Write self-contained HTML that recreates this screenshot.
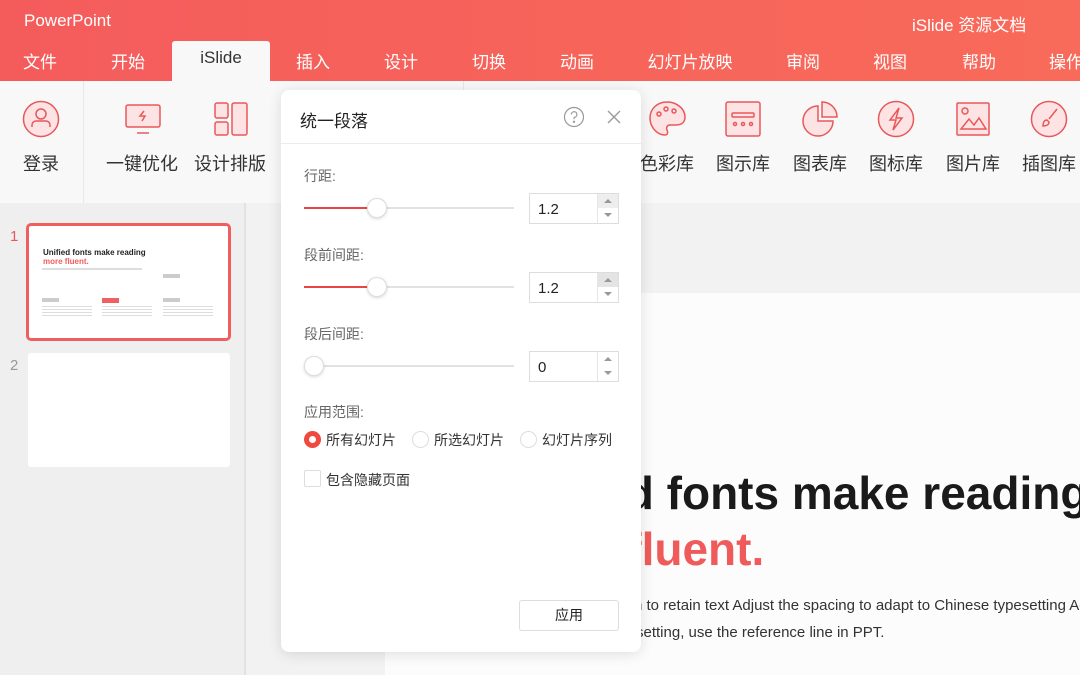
<!DOCTYPE html>
<html><head><meta charset="utf-8"><style>
*{margin:0;padding:0;box-sizing:border-box}
body{width:1080px;height:675px;overflow:hidden;position:relative;background:#f2f2f2;font-family:"Liberation Sans","Noto Sans CJK SC",sans-serif;color:#333}
.a{position:absolute}
.top{left:0;top:0;width:1080px;height:81px;background:linear-gradient(90deg,#f45c5c,#f7655a 60%,#f86a5a)}
.tab{position:absolute;top:48px;font-size:17px;color:#fff;transform:translateX(-50%);white-space:nowrap}
.rib{left:0;top:81px;width:1080px;height:122px;background:#f8f8f8}
.lbl{position:absolute;top:150px;font-size:18px;color:#333;transform:translateX(-50%);white-space:nowrap}
.ic{position:absolute;top:100px}
.dlg{left:281px;top:90px;width:360px;height:562px;background:#fff;border-radius:8px;box-shadow:0 2px 14px rgba(0,0,0,.12)}
.fl{position:absolute;left:23px;font-size:14px;color:#666}
.track{position:absolute;left:23px;width:210px;height:2px;background:#e2e2e2}
.fill{position:absolute;left:0;top:0;height:2px;background:#e84545}
.thumb{position:absolute;width:20px;height:20px;border-radius:50%;background:#fff;border:1px solid #ddd;box-shadow:0 1px 3px rgba(0,0,0,.15);top:-9px}
.inp{position:absolute;left:248px;width:90px;height:31px;border:1px solid #ddd;font-size:15px;color:#222;padding:7px 0 0 8px}
.sp{position:absolute;right:0;top:0;width:21px;height:29px;border-left:1px solid #e6e6e6}
.sp i{display:block;height:14px;position:relative}
.up:after{content:"";position:absolute;left:6px;top:5px;border:4px solid transparent;border-bottom:4px solid #999;border-top:0}
.dn:after{content:"";position:absolute;left:6px;top:5px;border:4px solid transparent;border-top:4px solid #999;border-bottom:0}
.rad{position:absolute;top:341px;width:17px;height:17px;border-radius:50%;border:1px solid #ddd}
.rt{position:absolute;top:340px;font-size:14px;color:#333}
</style></head><body>
<div class="a top"></div>
<div class="a" style="left:24px;top:11px;color:#fff;font-size:17px">PowerPoint</div>
<div class="a" style="left:912px;top:11px;color:#fff;font-size:17px">iSlide 资源文档</div>
<div class="a" style="left:172px;top:41px;width:98px;height:41px;background:#f8f8f8;border-radius:3px 3px 0 0"></div>
<div class="tab" style="left:40px">文件</div><div class="tab" style="left:128px">开始</div>
<div class="tab" style="left:221px;color:#333">iSlide</div>
<div class="tab" style="left:313px">插入</div><div class="tab" style="left:401px">设计</div><div class="tab" style="left:489px">切换</div>
<div class="tab" style="left:577px">动画</div><div class="tab" style="left:690px">幻灯片放映</div><div class="tab" style="left:803px">审阅</div>
<div class="tab" style="left:890px">视图</div><div class="tab" style="left:979px">帮助</div><div class="tab" style="left:1066px">操作</div>
<div class="a rib"></div>
<div class="a" style="left:83px;top:81px;width:1px;height:122px;background:#e8e8e8"></div>
<div class="a" style="left:463px;top:81px;width:1px;height:122px;background:#e8e8e8"></div>
<svg class="ic" style="left:22px" width="38" height="38" viewBox="0 0 38 38" fill="#fde3e3" stroke="#e8585a" stroke-width="1.5"><circle cx="19" cy="19" r="17.5"/><circle cx="19" cy="14" r="5" fill="none"/><path d="M10 27v-2a4 4 0 0 1 4-4h10a4 4 0 0 1 4 4v2" fill="none"/></svg>
<svg class="ic" style="left:124px" width="38" height="38" viewBox="0 0 38 38" stroke="#e8585a" stroke-width="1.5"><rect x="2" y="5" width="34" height="22" rx="2" fill="#fde3e3"/><path d="M13 33h12" fill="none"/><path d="M20 11l-4 5h5l-3 5" fill="none"/></svg>
<svg class="ic" style="left:213px" width="36" height="38" viewBox="0 0 36 38" fill="#fde3e3" stroke="#e8585a" stroke-width="1.5"><rect x="2" y="3" width="13" height="15" rx="2"/><rect x="2" y="22" width="13" height="13" rx="2"/><rect x="19" y="3" width="15" height="32" rx="2"/></svg>
<div class="lbl" style="left:41px">登录</div><div class="lbl" style="left:142px">一键优化</div><div class="lbl" style="left:230px">设计排版</div>
<svg class="ic" style="left:648px" width="38" height="38" viewBox="0 0 38 38" fill="#fde3e3" stroke="#e8585a" stroke-width="1.5"><path d="M19 2C9 2 2 9 2 18s7 17 15 17c3 0 3-3 2-5s0-5 3-5h6c6 0 9-3 9-8C37 9 29 2 19 2z"/><circle cx="11" cy="14" r="2" fill="none"/><circle cx="18" cy="9" r="2" fill="none"/><circle cx="26" cy="11" r="2" fill="none"/></svg>
<svg class="ic" style="left:724px" width="38" height="38" viewBox="0 0 38 38" fill="#fde3e3" stroke="#e8585a" stroke-width="1.5"><rect x="2" y="2" width="34" height="34" rx="2"/><rect x="8" y="13" width="22" height="4" rx="1" fill="none"/><circle cx="11" cy="24" r="1.5" fill="none"/><circle cx="19" cy="24" r="1.5" fill="none"/><circle cx="27" cy="24" r="1.5" fill="none"/></svg>
<svg class="ic" style="left:801px" width="38" height="38" viewBox="0 0 38 38" fill="#fde3e3" stroke="#e8585a" stroke-width="1.5"><path d="M17 6A15 15 0 1 0 32 21H17z"/><path d="M21 2v15h15A15 15 0 0 0 21 2z"/></svg>
<svg class="ic" style="left:877px" width="38" height="38" viewBox="0 0 38 38" fill="#fde3e3" stroke="#e8585a" stroke-width="1.5"><circle cx="19" cy="19" r="17.5"/><path d="M22 8l-9 12h6l-3 10 9-12h-6z" fill="none"/></svg>
<svg class="ic" style="left:954px" width="38" height="38" viewBox="0 0 38 38" fill="#fde3e3" stroke="#e8585a" stroke-width="1.5"><rect x="3" y="3" width="32" height="32" rx="1"/><circle cx="11" cy="11" r="3" fill="none"/><path d="M7 29l8-10 5 6 5-7 7 11z" fill="none"/></svg>
<svg class="ic" style="left:1030px" width="38" height="38" viewBox="0 0 38 38" fill="#fde3e3" stroke="#e8585a" stroke-width="1.5"><circle cx="19" cy="19" r="17.5"/><path d="M27 9l-8 10M17 20c-3 0-4 3-4 6 3 0 6-1 6-4z" fill="none"/></svg>
<div class="lbl" style="left:667px">色彩库</div><div class="lbl" style="left:743px">图示库</div><div class="lbl" style="left:820px">图表库</div>
<div class="lbl" style="left:896px">图标库</div><div class="lbl" style="left:973px">图片库</div><div class="lbl" style="left:1049px">插图库</div>
<!-- left panel -->
<div class="a" style="left:0;top:203px;width:245px;height:472px;background:#efefef"></div>
<div class="a" style="left:244px;top:203px;width:2px;height:472px;background:#e2e2e2"></div>
<div class="a" style="left:10px;top:228px;color:#e8585a;font-size:15px">1</div>
<div class="a" style="left:10px;top:357px;color:#999;font-size:15px">2</div>
<div class="a" style="left:26px;top:223px;width:205px;height:118px;border:3px solid #ef5f5f;border-radius:5px;background:#fff"></div>
<div class="a" style="left:43px;top:248px;font-size:8px;font-weight:bold;color:#222">Unified fonts make reading<br><span style="color:#f05a5a">more fluent.</span></div>
<div class="a" style="left:42px;top:268px;width:100px;height:2px;background:#ddd"></div>
<div class="a" style="left:163px;top:274px;width:17px;height:4px;background:#ccc"></div>
<div class="a" style="left:42px;top:298px;width:17px;height:4px;background:#ccc"></div>
<div class="a" style="left:102px;top:298px;width:17px;height:5px;background:#f06060"></div>
<div class="a" style="left:163px;top:298px;width:17px;height:4px;background:#ccc"></div>
<div class="a" style="left:42px;top:306px;width:50px;height:10px;background:repeating-linear-gradient(#ddd 0 1px,transparent 1px 3px)"></div>
<div class="a" style="left:102px;top:306px;width:50px;height:10px;background:repeating-linear-gradient(#ddd 0 1px,transparent 1px 3px)"></div>
<div class="a" style="left:163px;top:306px;width:50px;height:10px;background:repeating-linear-gradient(#ddd 0 1px,transparent 1px 3px)"></div>
<div class="a" style="left:28px;top:353px;width:202px;height:114px;background:#fff;border-radius:3px"></div>
<!-- main slide -->
<div class="a" style="left:385px;top:293px;width:695px;height:382px;background:#fcfcfc"></div>
<div class="a" style="left:498px;top:465px;font-size:46px;font-weight:bold;color:#1a1a1a;white-space:nowrap;line-height:56px">Unified fonts make reading</div>
<div class="a" style="left:501px;top:521px;font-size:46px;font-weight:bold;color:#ef5b5b;white-space:nowrap;line-height:56px">more fluent.</div>
<div class="a" style="left:634px;top:592px;font-size:15px;color:#333;white-space:nowrap;line-height:27px">n to retain text Adjust the spacing to adapt to Chinese typesetting Adjust</div>
<div class="a" style="left:636px;top:619px;font-size:15px;color:#333;white-space:nowrap;line-height:27px">setting, use the reference line in PPT.</div>
<!-- dialog -->
<div class="a dlg">
<div class="a" style="left:19px;top:17px;font-size:17px;color:#222">统一段落</div>
<svg class="a" style="left:282px;top:16px" width="22" height="22" viewBox="0 0 22 22" fill="none" stroke="#999" stroke-width="1.2"><circle cx="11" cy="11" r="9.5"/><path d="M8.3 8.5a2.8 2.8 0 1 1 3.5 2.7c-.6.2-.8.7-.8 1.3v.8"/><circle cx="11" cy="15.8" r=".6" fill="#999"/></svg>
<svg class="a" style="left:326px;top:20px" width="14" height="14" viewBox="0 0 14 14" stroke="#999" stroke-width="1.3"><path d="M1 1l12 12M13 1L1 13"/></svg>
<div class="a" style="left:0;top:53px;width:360px;height:1px;background:#ececec"></div>
<div class="fl" style="top:76px">行距:</div>
<div class="track" style="top:117px"><div class="fill" style="width:75px"></div><div class="thumb" style="left:63px"></div></div>
<div class="inp" style="top:103px">1.2<div class="sp"><i class="up" style="background:#eee"></i><i class="dn"></i></div></div>
<div class="fl" style="top:155px">段前间距:</div>
<div class="track" style="top:196px"><div class="fill" style="width:75px"></div><div class="thumb" style="left:63px"></div></div>
<div class="inp" style="top:182px">1.2<div class="sp"><i class="up" style="background:#e4e4e4"></i><i class="dn"></i></div></div>
<div class="fl" style="top:234px">段后间距:</div>
<div class="track" style="top:275px"><div class="thumb" style="left:0px"></div></div>
<div class="inp" style="top:261px">0<div class="sp"><i class="up"></i><i class="dn"></i></div></div>
<div class="fl" style="top:312px">应用范围:</div>
<div class="rad" style="left:23px;border:5px solid #f0493f"></div><div class="rt" style="left:45px">所有幻灯片</div>
<div class="rad" style="left:131px"></div><div class="rt" style="left:153px">所选幻灯片</div>
<div class="rad" style="left:239px"></div><div class="rt" style="left:261px">幻灯片序列</div>
<div class="a" style="left:23px;top:380px;width:17px;height:17px;border:1px solid #ddd;border-radius:2px"></div>
<div class="rt" style="left:45px;top:380px">包含隐藏页面</div>
<div class="a" style="left:238px;top:510px;width:100px;height:31px;border:1px solid #ddd;border-radius:3px;font-size:14px;color:#222;text-align:center;line-height:29px">应用</div>
</div>
</body></html>
